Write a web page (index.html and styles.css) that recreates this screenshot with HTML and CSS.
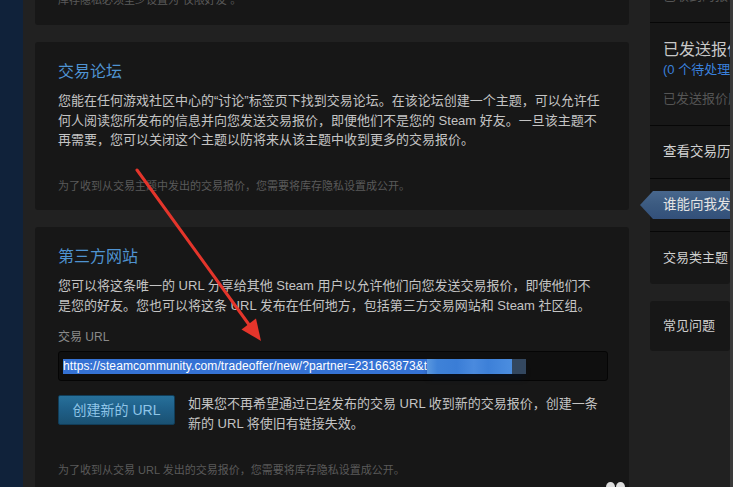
FILE: index.html
```html
<!DOCTYPE html>
<html lang="zh-CN">
<head>
<meta charset="utf-8">
<title>交易报价</title>
<link rel="stylesheet" href="styles.css">
</head>
<body>
<div class="page">
  <div class="navstrip"></div>
  <main class="content">
    <section class="panel panel-top">
      <p class="note">库存隐私必须至少设置为“仅限好友”。</p>
    </section>
    <section class="panel panel-forum">
      <h2 class="title">交易论坛</h2>
      <p class="body">您能在任何游戏社区中心的“讨论”标签页下找到交易论坛。在该论坛创建一个主题，可以允许任<br>何人阅读您所发布的信息并向您发送交易报价，即便他们不是您的 Steam 好友。一旦该主题不<br>再需要，您可以关闭这个主题以防将来从该主题中收到更多的交易报价。</p>
      <p class="note note-forum">为了收到从交易主题中发出的交易报价，您需要将库存隐私设置成公开。</p>
    </section>
    <section class="panel panel-third">
      <h2 class="title">第三方网站</h2>
      <p class="body">您可以将这条唯一的 URL 分享给其他 Steam 用户以允许他们向您发送交易报价，即使他们不<br>是您的好友。您也可以将这条 URL 发布在任何地方，包括第三方交易网站和 Steam 社区组。</p>
      <div class="field-label">交易 URL</div>
      <div class="url-field"><span class="sel">https://steamcommunity.com/tradeoffer/new/?partner=231663873&amp;t</span><span class="blurred"></span></div>
      <div class="action-row">
        <button class="btn">创建新的 URL</button>
        <p class="action-text">如果您不再希望通过已经发布的交易 URL 收到新的交易报价，创建一条<br>新的 URL 将使旧有链接失效。</p>
      </div>
      <p class="note note-third">为了收到从交易 URL 发出的交易报价，您需要将库存隐私设置成公开。</p>
    </section>
  </main>
  <aside class="sidebar">
    <div class="side-box side-box-main">
      <div class="side-row row-first"><span class="side-muted cut">已收到的报价历史</span></div>
      <div class="side-row row-sent">
        <span class="sent-title">已发送报价</span>
        <span class="sent-count">(0 个待处理)</span>
        <span class="side-muted sent-history">已发送报价历史</span>
      </div>
      <div class="side-row row-history">查看交易历史记录</div>
      <div class="side-row row-active"><div class="tab">谁能向我发送交易报价？</div></div>
      <div class="side-row">交易类主题</div>
    </div>
    <div class="side-box side-box-faq">
      <div class="side-row row-faq">常见问题</div>
    </div>
  </aside>
  <div class="scrollbar"></div>
</div>
<svg class="arrow" width="733" height="487" viewBox="0 0 733 487" aria-hidden="true">
  <line x1="137" y1="170" x2="250" y2="326" stroke="#e4352b" stroke-width="3" stroke-linecap="round"/>
  <polygon points="261,341 256,318.5 241.5,329.5" fill="#e4352b"/>
</svg>
<div class="watermark"><span></span><span></span></div>
</body>
</html>
```

FILE: styles.css
```css
html, body {
  margin: 0;
  padding: 0;
  width: 733px;
  height: 487px;
  overflow: hidden;
  background: #212121;
}

body {
  font-family: "Liberation Sans", "Noto Sans CJK SC", sans-serif;
  color: #c4c4c4;
  position: relative;
}

p, h2 {
  margin: 0;
}

.page {
  display: flex;
  width: 733px;
  height: 487px;
}

.navstrip {
  flex: none;
  width: 23px;
  background: #10223a;
}

.content {
  flex: none;
  width: 594px;
  margin-left: 12px;
  display: flex;
  flex-direction: column;
  gap: 17px;
}

.panel {
  background: #171717;
  border-radius: 3px;
  padding: 0 21px 0 23px;
}

.panel-top {
  height: 25px;
  overflow: hidden;
  border-radius: 0 0 3px 3px;
}

.panel-top .note {
  margin-top: -8px;
}

.panel-forum {
  padding-top: 20px;
  padding-bottom: 16px;
}

.panel-third {
  padding-top: 20px;
  flex: 1;
  border-radius: 3px 3px 0 0;
}

.title {
  font-size: 16px;
  line-height: 20px;
  font-weight: normal;
  color: #4f93d1;
}

.body {
  margin-top: 9px;
  font-size: 13px;
  line-height: 19.5px;
  white-space: nowrap;
  color: #c4c4c4;
}

.note {
  font-size: 11px;
  line-height: 16px;
  color: #5a5a5a;
  white-space: nowrap;
}

.note-forum {
  margin-top: 28.5px;
}

.note-third {
  margin-top: 29px;
}

.field-label {
  margin-top: 14px;
  font-size: 12px;
  line-height: 16px;
  color: #8a8a8a;
}

.url-field {
  margin-top: 6px;
  height: 30px;
  box-sizing: border-box;
  border: 1px solid #050505;
  border-radius: 3px;
  background: #0f0f0f;
  padding-left: 4px;
  display: flex;
  align-items: center;
  white-space: nowrap;
}

.sel {
  font-size: 12px;
  line-height: 15px;
  letter-spacing: 0.1px;
  background: #3572d4;
  color: #ffffff;
}

.blurred {
  display: block;
  width: 99px;
  height: 15px;
  background:
    linear-gradient(to right, #33475f 0, #33475f 100%) right / 14px 100% no-repeat,
    linear-gradient(to right, #5a98e0 0, #3f82d8 12%, #3a7dd6 35%, #4a8ade 55%, #3d80d8 72%, #4c8ee0 100%) left / 85px 100% no-repeat;
  filter: blur(0.6px);
  box-shadow: 0 6px 6px -3px rgba(8, 18, 34, 0.9);
}

.action-row {
  margin-top: 13px;
  display: flex;
  align-items: flex-start;
  gap: 13px;
}

.btn {
  flex: none;
  width: 117px;
  height: 30px;
  margin-top: 1px;
  padding: 0;
  border: 1px solid #113d58;
  border-radius: 2px;
  background: linear-gradient(to bottom, #27709a 0%, #1f6089 45%, #1a5172 100%);
  color: #8fc5e8;
  font-family: "Liberation Sans", "Noto Sans CJK SC", sans-serif;
  font-size: 14px;
  line-height: 28px;
}

.action-text {
  font-size: 13px;
  line-height: 19.5px;
  white-space: nowrap;
  color: #c4c4c4;
}

.sidebar {
  flex: none;
  width: 80px;
  margin-left: 21px;
  display: flex;
  flex-direction: column;
  gap: 17px;
  clip-path: inset(-20px 0 -20px -14px);
}

.side-box {
  background: #171717;
  border-radius: 3px;
}

.side-box-main {
  border-radius: 0 0 3px 3px;
}

.side-row {
  box-sizing: border-box;
  height: 53px;
  padding-left: 13px;
  border-top: 1px solid #070707;
  display: flex;
  flex-direction: column;
  justify-content: center;
  white-space: nowrap;
  font-size: 13px;
  line-height: 18px;
  color: #d0d0d0;
}

.row-history {
  font-size: 13.5px;
}

.row-first {
  height: 22px;
  border-top: none;
  justify-content: flex-start;
}

.side-muted {
  color: #555555;
  font-size: 13px;
  line-height: 18px;
}

.cut {
  margin-top: -13px;
}

.row-sent {
  height: 103px;
}

.sent-title {
  font-size: 16px;
  line-height: 20px;
  color: #c8c8c8;
}

.sent-count {
  font-size: 13px;
  line-height: 20px;
  color: #3a80dc;
}

.sent-history {
  margin-top: 10px;
}

.row-active {
  padding-left: 0;
}

.tab {
  margin-left: -10px;
  width: 90px;
  height: 28px;
  padding-left: 23px;
  box-sizing: border-box;
  line-height: 28px;
  font-size: 13.5px;
  color: #e4e4e4;
  background: linear-gradient(to bottom, #48678d 0%, #3b5a80 50%, #33507a 100%);
  clip-path: polygon(0 50%, 13px 0, 100% 0, 100% 100%, 13px 100%);
}

.side-box-faq .side-row {
  border-top: none;
  height: 50px;
}

.scrollbar {
  flex: none;
  width: 3px;
  background: #3a3a3a;
}

.arrow {
  position: absolute;
  top: 0;
  left: 0;
  pointer-events: none;
}

.watermark {
  position: absolute;
  left: 606px;
  top: 482px;
  display: flex;
  gap: 1px;
}

.watermark span {
  width: 9px;
  height: 10px;
  border-radius: 50%;
  background: #dcdcdc;
}
```
